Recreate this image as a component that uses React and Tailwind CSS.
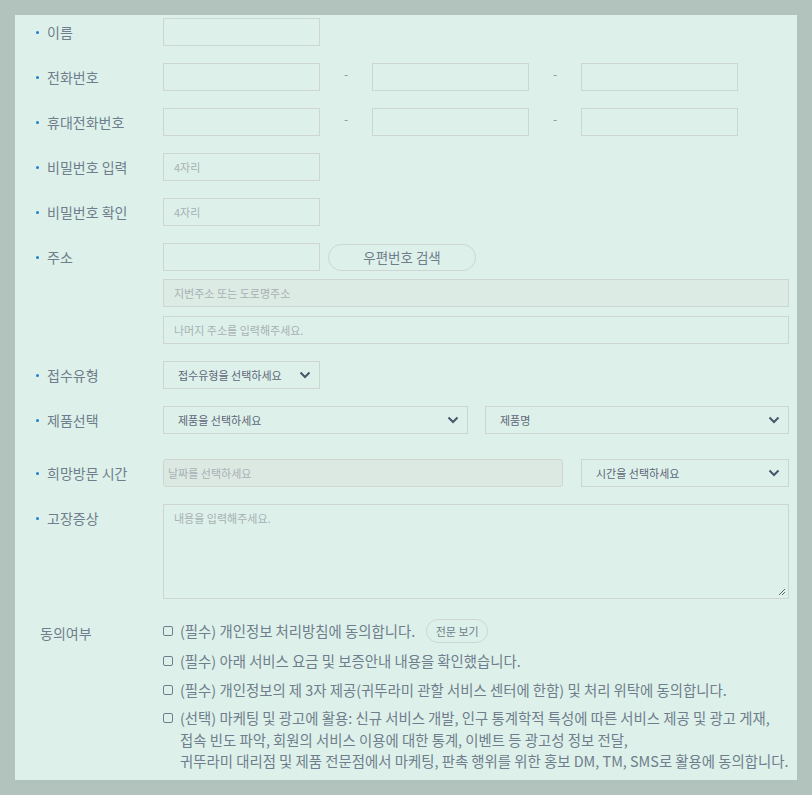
import React from "react";

const font = { fontFamily: '"Noto Sans CJK KR", "Noto Sans", sans-serif' };

const Chevron = () => (
  <svg width="12" height="8" viewBox="0 0 12 8" className="shrink-0">
    <path d="M1.5 1.5 L6 6 L10.5 1.5" fill="none" stroke="#4b5567" strokeWidth="2" />
  </svg>
);

const Label = ({ children, bullet = true }) => (
  <div className="w-[148px] shrink-0 h-[28px] flex items-center">
    {bullet ? (
      <span className="w-[3px] h-[3px] rounded-full bg-[#1f7fd6] ml-[21px] mr-[8px]" />
    ) : (
      <span className="ml-[25px]" />
    )}
    <span className="text-[14px] text-[#6f7d8c]">{children}</span>
  </div>
);

const Box = ({ w, placeholder, className = "" }) => (
  <div
    className={`${w} h-[28px] border border-[#cdd6d3] flex items-center px-[10px] text-[11px] text-[#a7b0b3] ${className}`}
  >
    {placeholder}
  </div>
);

const Select = ({ w, text }) => (
  <div className={`${w} h-[28px] border border-[#cdd6d3] flex items-center justify-between pl-[14px] pr-[8px] text-[11px] text-[#5e6578]`}>
    <span>{text}</span>
    <Chevron />
  </div>
);

const Dash = () => <div className="w-[52px] flex justify-center text-[12px] text-[#8a96a5] -mt-[7px]">-</div>;

const Check = ({ children }) => (
  <div className="flex items-start">
    <span className="w-[10px] h-[10px] border border-[#6f7d8c] rounded-[2px] mt-[6px] mr-[7px] shrink-0" />
    <div className="text-[14.4px] leading-[21.5px] text-[#6f7d8c] whitespace-nowrap">{children}</div>
  </div>
);

export default function App() {
  return (
    <div className="w-[812px] h-[795px] bg-[#b1c3bc] pt-[15px] pl-[15px] overflow-hidden" style={font}>
      <div className="w-[782px] h-[765px] bg-[#ddf1ea] pt-[3px] pr-[8px]">
        <div className="flex items-center">
          <Label>이름</Label>
          <Box w="w-[157px]" />
        </div>

        <div className="flex items-center mt-[17px]">
          <Label>전화번호</Label>
          <Box w="w-[157px]" />
          <Dash />
          <Box w="w-[157px]" />
          <Dash />
          <Box w="w-[157px]" />
        </div>

        <div className="flex items-center mt-[17px]">
          <Label>휴대전화번호</Label>
          <Box w="w-[157px]" />
          <Dash />
          <Box w="w-[157px]" />
          <Dash />
          <Box w="w-[157px]" />
        </div>

        <div className="flex items-center mt-[17px]">
          <Label>비밀번호 입력</Label>
          <Box w="w-[157px]" placeholder="4자리" />
        </div>

        <div className="flex items-center mt-[17px]">
          <Label>비밀번호 확인</Label>
          <Box w="w-[157px]" placeholder="4자리" />
        </div>

        <div className="flex items-start mt-[17px]">
          <Label>주소</Label>
          <div className="flex-1 flex flex-col">
            <div className="flex items-center">
              <Box w="w-[157px]" />
              <div className="ml-[8px] w-[148px] h-[27px] rounded-full border border-[#cdd6d3] flex items-center justify-center text-[13.5px] text-[#6f7d8c]">
                우편번호 검색
              </div>
            </div>
            <Box w="w-full" placeholder="지번주소 또는 도로명주소" className="mt-[8px] bg-[#dcebe4]" />
            <Box w="w-full" placeholder="나머지 주소를 입력해주세요." className="mt-[9px]" />
          </div>
        </div>

        <div className="flex items-center mt-[17px]">
          <Label>접수유형</Label>
          <Select w="w-[157px]" text="접수유형을 선택하세요" />
        </div>

        <div className="flex items-center mt-[17px]">
          <Label>제품선택</Label>
          <div className="flex-1 flex gap-[17px]">
            <div className="w-[305px]">
              <Select w="w-full" text="제품을 선택하세요" />
            </div>
            <div className="flex-1">
              <Select w="w-full" text="제품명" />
            </div>
          </div>
        </div>

        <div className="flex items-center mt-[25px]">
          <Label>희망방문 시간</Label>
          <div className="flex-1 flex gap-[18px]">
            <div className="w-[400px] h-[28px] border border-[#cdd6d3] rounded-[3px] bg-[#dce9e3] flex items-center px-[4px] text-[11px] text-[#a7b0b3]">
              날짜를 선택하세요
            </div>
            <div className="flex-1">
              <Select w="w-full" text="시간을 선택하세요" />
            </div>
          </div>
        </div>

        <div className="flex items-start mt-[17px]">
          <Label>고장증상</Label>
          <div className="flex-1 h-[95px] border border-[#cdd6d3] relative px-[10px] pt-[5px] text-[11px] text-[#a7b0b3]">
            내용을 입력해주세요.
            <svg width="9" height="9" viewBox="0 0 9 9" className="absolute right-[2px] bottom-[2px]">
              <path d="M8 2 L2 8 M8 5 L5 8" stroke="#5b6575" strokeWidth="1" />
            </svg>
          </div>
        </div>

        <div className="flex items-start mt-[20px]">
          <div className="w-[148px] shrink-0 pt-[4px] pl-[25px] text-[14px] text-[#6f7d8c]">동의여부</div>
          <div className="flex-1 flex flex-col gap-[7px]">
            <div className="flex items-center">
              <Check>(필수) 개인정보 처리방침에 동의합니다.</Check>
              <div className="ml-[11px] w-[62px] h-[24px] rounded-full border border-[#cdd6d3] flex items-center justify-center text-[11px] text-[#6f7d8c]">
                전문 보기
              </div>
            </div>
            <Check>(필수) 아래 서비스 요금 및 보증안내 내용을 확인했습니다.</Check>
            <Check>(필수) 개인정보의 제 3자 제공(귀뚜라미 관할 서비스 센터에 한함) 및 처리 위탁에 동의합니다.</Check>
            <Check>
              (선택) 마케팅 및 광고에 활용: 신규 서비스 개발, 인구 통계학적 특성에 따른 서비스 제공 및 광고 게재,
              <br />
              접속 빈도 파악, 회원의 서비스 이용에 대한 통계, 이벤트 등 광고성 정보 전달,
              <br />
              귀뚜라미 대리점 및 제품 전문점에서 마케팅, 판촉 행위를 위한 홍보 DM, TM, SMS로 활용에 동의합니다.
            </Check>
          </div>
        </div>
      </div>
    </div>
  );
}
